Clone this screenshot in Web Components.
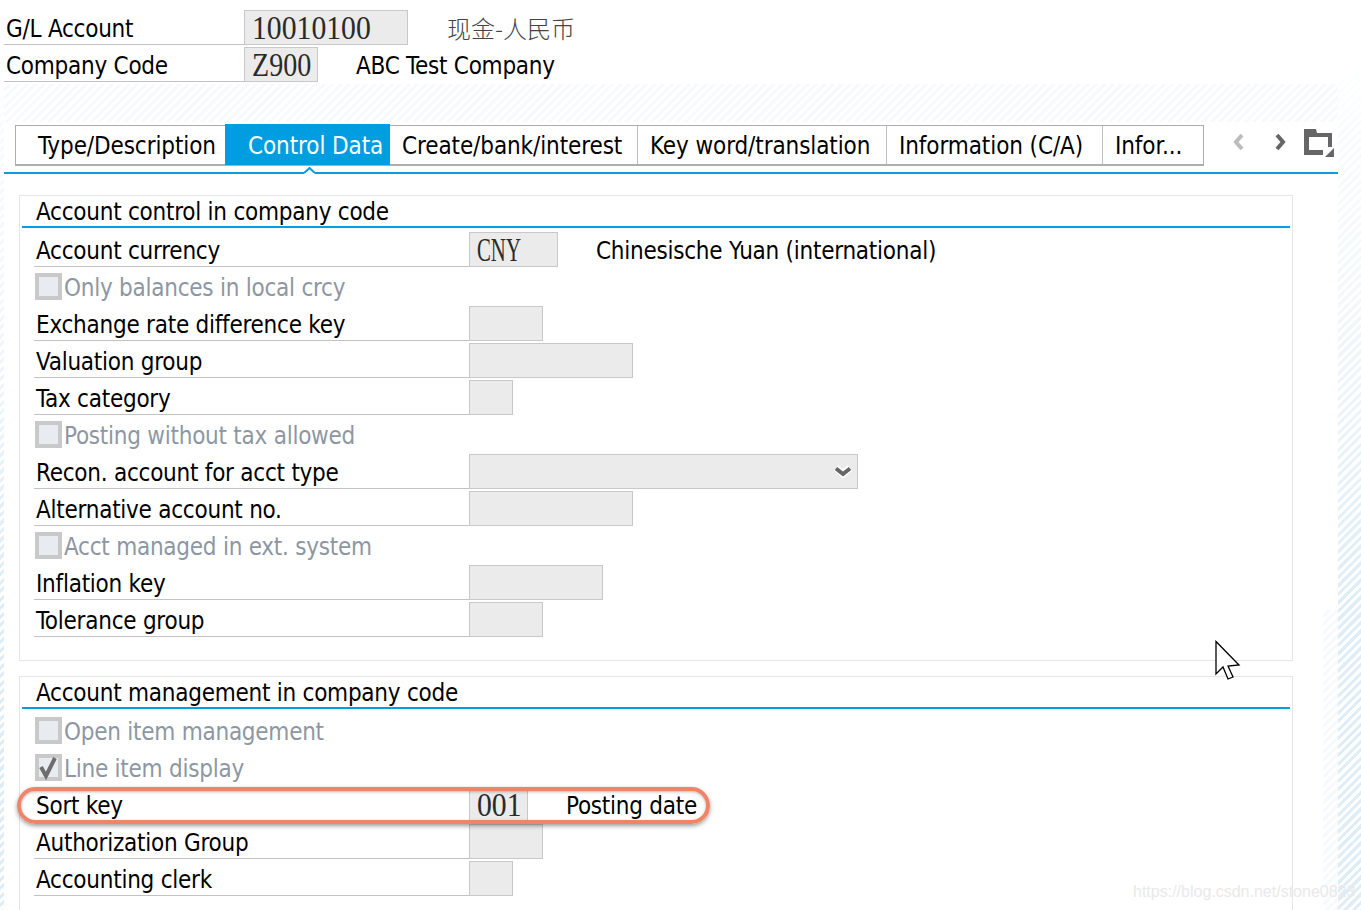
<!DOCTYPE html>
<html>
<head>
<meta charset="utf-8">
<style>
html,body { margin:0; height:910px; overflow:hidden; }
body {
  background:
    linear-gradient(to bottom,#fff 60px,rgba(255,255,255,.8) 130px,rgba(255,255,255,.6) 300px,rgba(255,255,255,0) 620px),
    repeating-linear-gradient(135deg,#fff,#fff 3px,#deedf6 3px,#deedf6 6px);
  font:24px "DejaVu Sans Condensed","Noto Sans",sans-serif; letter-spacing:-.25px; color:#000;
}
</style>
</head>
<body>
<sap-screen>
  <sap-row slot="header" label="G/L Account" value="10010100" w="164" lw="240" desc="现金-人民币" cjk></sap-row>
  <sap-row slot="header" label="Company Code" value="Z900" sx=".85" w="74" lw="240" desc="ABC Test Company"></sap-row>
  <sap-tabs slot="tabs">
    <sap-tab w="209" first>Type/Description</sap-tab>
    <sap-tab w="165" active>Control Data</sap-tab>
    <sap-tab w="248">Create/bank/interest</sap-tab>
    <sap-tab w="249">Key word/translation</sap-tab>
    <sap-tab w="216">Information (C/A)</sap-tab>
    <sap-tab w="100" last>Infor...</sap-tab>
  </sap-tabs>
  <sap-section title="Account control in company code" pad="21">
    <sap-row label="Account currency" value="CNY" sx=".63" w="89" desc="Chinesische Yuan (international)"></sap-row>
    <sap-check>Only balances in local crcy</sap-check>
    <sap-row label="Exchange rate difference key" w="74"></sap-row>
    <sap-row label="Valuation group" w="164"></sap-row>
    <sap-row label="Tax category" w="44"></sap-row>
    <sap-check>Posting without tax allowed</sap-check>
    <sap-row label="Recon. account for acct type" w="389" select></sap-row>
    <sap-row label="Alternative account no." w="164"></sap-row>
    <sap-check>Acct managed in ext. system</sap-check>
    <sap-row label="Inflation key" w="134"></sap-row>
    <sap-row label="Tolerance group" w="74"></sap-row>
  </sap-section>
  <sap-section title="Account management in company code" pad="40" style="margin-top:15px">
    <sap-check>Open item management</sap-check>
    <sap-check checked>Line item display</sap-check>
    <sap-row label="Sort key" value="001" w="59" desc="Posting date"></sap-row>
    <sap-row label="Authorization Group" w="74"></sap-row>
    <sap-row label="Accounting clerk" w="44"></sap-row>
  </sap-section>
</sap-screen>
<sap-overlays></sap-overlays>

<script>
const hatch = 'repeating-linear-gradient(135deg,#fff,#fff 3px,#f7fafc 3px,#f7fafc 6px)';

customElements.define('sap-screen', class extends HTMLElement {
  constructor() {
    super();
    this.attachShadow({ mode: 'open' }).innerHTML = `
    <style>
    :host {
      display:block; width:1334px; height:910px; margin-left:4px; overflow:hidden;
      background:${hatch} right bottom / 15px 300px no-repeat, ${hatch} 0 84px / 100% 38px no-repeat, #fff;
    }
    header { padding-top:10px; }
    ::slotted(sap-tabs) { margin-top:43px; }
    main { margin:21px 45px 0 15px; }
    </style>
    <header><slot name="header"></slot></header>
    <slot name="tabs"></slot>
    <main><slot></slot></main>`;
  }
});

customElements.define('sap-row', class extends HTMLElement {
  constructor() {
    super();
    const a = n => this.getAttribute(n);
    const has = n => this.hasAttribute(n);
    this.attachShadow({ mode: 'open' }).innerHTML = `
    <style>
    :host { display:flex; height:35px; margin-bottom:2px; line-height:39px; white-space:nowrap; }
    .label { box-sizing:border-box; width:${a('lw') || 435}px; padding-left:2px; border-bottom:1px solid #c2c2c2; }
    .field {
      box-sizing:border-box; width:${a('w')}px; padding-left:7px; position:relative;
      background:#ebebeb; border:1px solid #c8c8c8; letter-spacing:0;
      font:33px/35px "Liberation Serif",serif; color:#2a2a2a;
    }
    .field span { display:inline-block; transform:scaleX(${a('sx') || .9}); transform-origin:0 50%; }
    .desc { margin-left:38px; }
    .cjk { font:24px/36px "Noto Sans CJK SC",serif; font-weight:300; color:#444; margin-left:39px; letter-spacing:0; }
    svg { position:absolute; right:4px; top:10px; }
    </style>
    <div class="label">${a('label')}</div>
    <div class="field"><span>${a('value') || ''}</span>${has('select') ? `<svg width="20" height="14" viewBox="0 0 20 14"><path d="M3 3 L10 9 L17 3" fill="none" stroke="#fff" stroke-width="7"/><path d="M3 3.5 L10 9 L17 3.5" fill="none" stroke="#666" stroke-width="4"/></svg>` : ''}</div>
    ${a('desc') ? `<div class="desc ${has('cjk') ? 'cjk' : ''}">${a('desc')}</div>` : ''}`;
  }
});

customElements.define('sap-check', class extends HTMLElement {
  constructor() {
    super();
    const tick = this.hasAttribute('checked')
      ? `<svg width="27" height="27" viewBox="0 0 27 27"><path d="M6 13 L11 22 L20 4" fill="none" stroke="#6d6d6d" stroke-width="4"/></svg>` : '';
    this.attachShadow({ mode: 'open' }).innerHTML = `
    <style>
    :host { display:flex; align-items:center; height:35px; margin-bottom:2px; padding-left:1px; color:#8d97a3; white-space:nowrap; }
    i { box-sizing:border-box; width:27px; height:27px; margin-right:2px; flex:none; position:relative; background:#e8ebef; border:4px solid #c9c9c9; }
    svg { position:absolute; left:-4px; top:-4px; }
    span { padding-top:2px; }
    </style>
    <i>${tick}</i><span><slot></slot></span>`;
  }
});

customElements.define('sap-tabs', class extends HTMLElement {
  constructor() {
    super();
    this.attachShadow({ mode: 'open' }).innerHTML = `
    <style>
    :host { display:block; position:relative; height:49px; letter-spacing:-.1px; }
    .bar { display:flex; box-sizing:border-box; width:1189px; height:41px; margin-left:11px; border:solid #adadad; border-width:1px 1px 2px 1px; background:#fff; }
    .line { position:absolute; left:0; right:0; top:47px; height:2px; background:#009de0; }
    .notch { position:absolute; left:300px; top:42px; }
    .left { position:absolute; left:1229px; top:8px; }
    .right { position:absolute; left:1270px; top:8px; }
    .folder { position:absolute; left:1300px; top:4px; }
    </style>
    <div class="bar"><slot></slot></div>
    <div class="line"></div>
    <svg class="notch" width="11" height="7" viewBox="0 0 11 7"><path d="M0 6 L5.5 1 L11 6 V7 H0 Z" fill="#fff"/><path d="M0 6 L5.5 1 L11 6" fill="none" stroke="#009de0" stroke-width="2"/></svg>
    <svg class="left" width="12" height="18" viewBox="0 0 12 18"><path d="M9 2 L3 9 L9 16" fill="none" stroke="#bcbcbc" stroke-width="4"/></svg>
    <svg class="right" width="12" height="18" viewBox="0 0 12 18"><path d="M3 2 L9 9 L3 16" fill="none" stroke="#666" stroke-width="4"/></svg>
    <svg class="folder" width="30" height="28" viewBox="0 0 30 28">
      <path d="M0 0 H12 L13 4 H28 V18 H24 V8 H5 V21 H19 V26 H0 Z" fill="#666"/>
      <path d="M30 19 V28 H21 Z" fill="#666"/>
    </svg>`;
  }
});

customElements.define('sap-tab', class extends HTMLElement {
  constructor() {
    super();
    const first = this.hasAttribute('first'), active = this.hasAttribute('active');
    this.attachShadow({ mode: 'open' }).innerHTML = `
    <style>
    :host {
      display:block; box-sizing:border-box; flex:none; white-space:nowrap; line-height:41px;
      width:${this.getAttribute('w')}px; padding-left:${first ? 22 : active ? 23 : 12}px;
      ${active ? 'background:#009de0; color:#fff; margin:-2px 0 -1px; line-height:45px;' : ''}
      ${first || active || this.hasAttribute('last') ? '' : 'border-right:1px solid #bdbdbd;'}
    }
    </style>
    <slot></slot>`;
  }
});

customElements.define('sap-section', class extends HTMLElement {
  constructor() {
    super();
    this.attachShadow({ mode: 'open' }).innerHTML = `
    <style>
    :host { display:block; background:#fff; border:1px solid #e6e6e6; padding:0 2px ${this.getAttribute('pad')}px; }
    h2 { margin:0 0 4px; height:30px; padding-left:14px; font:inherit; line-height:33px; border-bottom:2px solid #009de0; }
    .rows { padding-left:12px; }
    </style>
    <h2>${this.getAttribute('title')}</h2>
    <div class="rows"><slot></slot></div>`;
  }
});

customElements.define('sap-overlays', class extends HTMLElement {
  constructor() {
    super();
    this.attachShadow({ mode: 'open' }).innerHTML = `
    <style>
    :host { display:block; letter-spacing:0; }
    .oval { position:absolute; left:17px; top:787px; width:693px; height:37px; box-sizing:border-box; border:4px solid #ef8468; border-radius:19px; box-shadow:0 2px 4px rgba(60,60,60,.5), inset 0 1px 3px rgba(60,60,60,.35); }
    .cursor { position:absolute; left:1210px; top:636px; }
    .mark { position:absolute; left:1133px; top:881px; font:16px/22px "Liberation Sans",sans-serif; color:#e9e9e9; white-space:nowrap; }
    </style>
    <div class="oval"></div>
    <svg class="cursor" width="34" height="48" viewBox="1210 636 34 48"><path d="M1216 641.5 L1239 665 L1228 666 L1233 677 L1228 679 L1223 667 L1216 674 Z" fill="#fff" stroke="#000" stroke-width="1.3"/></svg>
    <div class="mark">https://blog.csdn.net/stone0823</div>`;
  }
});
</script>
</body>
</html>
